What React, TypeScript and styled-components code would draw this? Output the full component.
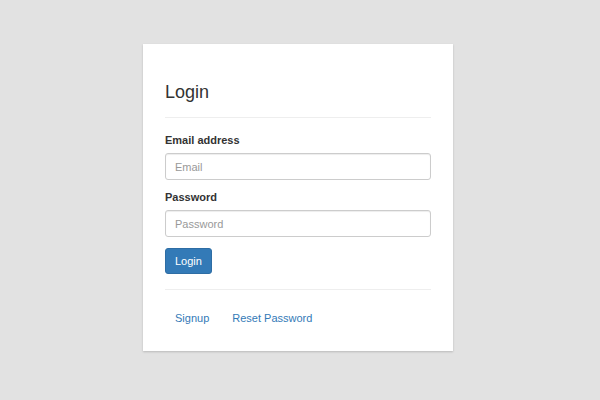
import React from "react";
import styled, { createGlobalStyle } from "styled-components";

const Global = createGlobalStyle`
  html, body {
    margin: 0;
    padding: 0;
    background: #e2e2e2;
    font-family: "Liberation Sans", Arial, Helvetica, sans-serif;
    color: #333;
  }
  * { box-sizing: border-box; }
`;

const Page = styled.div`
  min-height: 400px;
  display: flex;
  justify-content: center;
  align-items: flex-start;
  padding: 44px 4px 0 0;
`;

const Card = styled.div`
  width: 310px;
  background: #fff;
  padding: 22px 22px 17px;
  box-shadow: 0 1px 2px rgba(0, 0, 0, 0.18);
`;

const Title = styled.h1`
  margin: 16px 0 14px;
  font-size: 18px;
  line-height: 20px;
  font-weight: 400;
  color: #333;
  padding-bottom: 15px;
  border-bottom: 1px solid #eee;
`;

const FormGroup = styled.div<{ $gap: number }>`
  margin-bottom: ${(p) => p.$gap}px;
`;

const Label = styled.label`
  display: block;
  font-size: 11px;
  line-height: 16px;
  font-weight: 700;
  margin-bottom: 5px;
  color: #333;
`;

const Input = styled.input`
  display: block;
  width: 100%;
  height: 27px;
  padding: 0 9px;
  font-family: inherit;
  font-size: 11px;
  color: #555;
  background: #fff;
  border: 1px solid #ccc;
  border-radius: 3px;
  box-shadow: inset 0 1px 1px rgba(0, 0, 0, 0.075);
  outline: none;
  &::placeholder {
    color: #999;
  }
`;

const Button = styled.button`
  display: inline-block;
  font-family: inherit;
  font-size: 11px;
  line-height: 16px;
  padding: 4px 9px;
  color: #fff;
  background: #337ab7;
  border: 1px solid #2e6da4;
  border-radius: 3px;
  cursor: pointer;
`;

const Divider = styled.hr`
  margin: 15px 0 0;
  border: 0;
  border-top: 1px solid #eee;
`;

const Nav = styled.ul`
  list-style: none;
  margin: 12px 0 0;
  padding: 0;
  display: flex;
  gap: 3px;
`;

const NavLink = styled.a`
  display: block;
  padding: 8px 10px;
  font-size: 11px;
  line-height: 16px;
  color: #337ab7;
  text-decoration: none;
`;

export default function App() {
  return (
    <>
      <Global />
      <Page>
        <Card>
          <Title>Login</Title>
          <form onSubmit={(e) => e.preventDefault()}>
            <FormGroup $gap={9}>
              <Label htmlFor="email">Email address</Label>
              <Input id="email" type="email" placeholder="Email" />
            </FormGroup>
            <FormGroup $gap={11}>
              <Label htmlFor="password">Password</Label>
              <Input id="password" type="password" placeholder="Password" />
            </FormGroup>
            <Button type="submit">Login</Button>
          </form>
          <Divider />
          <Nav>
            <li>
              <NavLink href="#">Signup</NavLink>
            </li>
            <li>
              <NavLink href="#">Reset Password</NavLink>
            </li>
          </Nav>
        </Card>
      </Page>
    </>
  );
}
